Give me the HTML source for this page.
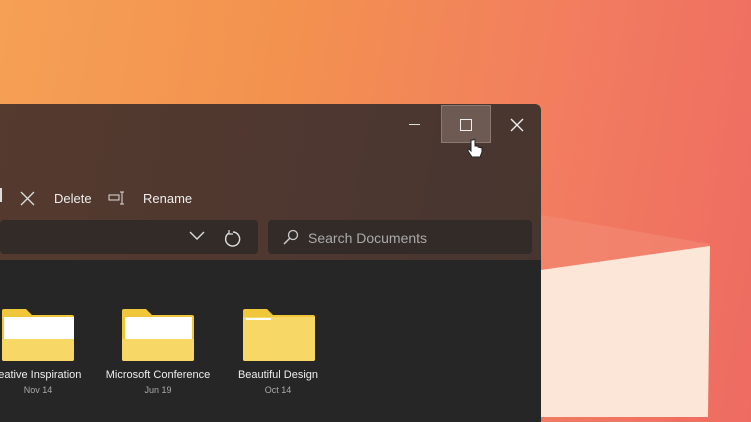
<!DOCTYPE html>
<html><head><meta charset="utf-8"><style>
*{margin:0;padding:0;box-sizing:border-box}
body{width:751px;height:422px;overflow:hidden;position:relative;font-family:"Liberation Sans",sans-serif;
background:linear-gradient(100deg,#f5a055 0%,#f3924f 35%,#f27d5f 70%,#ee6b62 100%);}
.win{position:absolute;left:0;top:104px;width:541px;height:318px;border-radius:0 6px 0 0;overflow:hidden;
background:linear-gradient(100deg,#553a2e,#4d3730 60%,#46352f);}
.content{position:absolute;left:0;top:156px;width:541px;height:162px;background:#262626;overflow:hidden}
.t{position:absolute;color:#eee;font-size:13px}
.box{position:absolute;background:#332b28;border-radius:4px;height:34px;top:116px}
.fold{position:absolute;top:49px;width:72px;height:52px}
.lbl{position:absolute;top:109px;color:#eee;font-size:11px;text-align:center;width:130px}
.dt{position:absolute;top:125px;color:#aaa;font-size:9px;text-align:center;width:130px}
</style></head><body>
<svg style="position:absolute;left:541px;top:200px" width="210" height="222">
<polygon points="0,15 169,44 169,50 0,70" fill="#f38a74" opacity=".6"/>
<polygon points="0,70 169,46 167,217 0,217" fill="#fbe6d8"/>
</svg>
<div class="win">
 <div style="position:absolute;left:441px;top:1px;width:50px;height:38px;background:#6d5a52;border:1px solid #8a7a72"></div>
 <div style="position:absolute;left:409px;top:20px;width:11px;height:1px;background:#ddd"></div>
 <div style="position:absolute;left:460px;top:15px;width:12px;height:12px;border:1.3px solid #eee"></div>
 <svg style="position:absolute;left:510px;top:14px" width="14" height="14"><path d="M1 1L13 13M13 1L1 13" stroke="#eee" stroke-width="1.4"/></svg>
 <svg style="position:absolute;left:466px;top:33px" width="18" height="24"><path d="M5 3v11l-2-2c-1 0-1 1-1 2l4 6h8l2-5v-4l-4-1V9h-3V3c0-1-2-1-2 0z" fill="#fff" stroke="#222" stroke-width="1"/></svg>
 <div style="position:absolute;left:0;top:84px;width:2px;height:14px;background:#ddd"></div>
 <svg style="position:absolute;left:20px;top:87px" width="15" height="15"><path d="M1 1L14 14M14 1L1 14" stroke="#ddd" stroke-width="1.3"/></svg>
 <div class="t" style="left:54px;top:87px">Delete</div>
 <svg style="position:absolute;left:108px;top:87px" width="18" height="14"><rect x="1" y="4" width="10" height="5" fill="none" stroke="#ddd"/><path d="M12 1h4M14 1v12M12 13h4" stroke="#ddd" fill="none"/></svg>
 <div class="t" style="left:143px;top:87px">Rename</div>
 <div class="box" style="left:0;width:258px"></div>
 <svg style="position:absolute;left:189px;top:127px" width="16" height="10"><path d="M1 1l7 7 7-7" stroke="#ddd" fill="none" stroke-width="1.4"/></svg>
 <svg style="position:absolute;left:224px;top:126px" width="18" height="18"><path d="M5 3A7 7 0 1 0 9 2" stroke="#ddd" fill="none" stroke-width="1.4"/><path d="M5 0v4h4" stroke="#ddd" fill="none" stroke-width="1.2"/></svg>
 <div class="box" style="left:268px;width:264px"></div>
 <svg style="position:absolute;left:283px;top:125px" width="16" height="16"><circle cx="10" cy="6" r="4.5" stroke="#ccc" fill="none" stroke-width="1.3"/><path d="M7 9L1 15" stroke="#ccc" stroke-width="1.5"/></svg>
 <div class="t" style="left:308px;top:126px;color:#aaa;font-size:14px">Search Documents</div>
 <div class="content">
  <svg class="fold" style="left:2px" viewBox="0 0 72 52"><path d="M0 2q0-2 2-2h22l6 6h40q2 0 2 2v42q0 2-2 2H2q-2 0-2-2z" fill="#f0c63a"/><rect x="2" y="8" width="70" height="22" fill="#fff"/><rect x="0" y="30" width="72" height="20" fill="#f7d766"/><path d="M0 50h72q0 2-2 2H2q-2 0-2-2z" fill="#f7d766"/></svg>
  <svg class="fold" style="left:122px" viewBox="0 0 72 52"><path d="M0 2q0-2 2-2h22l6 6h40q2 0 2 2v42q0 2-2 2H2q-2 0-2-2z" fill="#f0c63a"/><rect x="3" y="8" width="67" height="22" fill="#fff"/><rect x="0" y="30" width="72" height="20" fill="#f7d766"/><path d="M0 50h72q0 2-2 2H2q-2 0-2-2z" fill="#f7d766"/></svg>
  <svg class="fold" style="left:243px" viewBox="0 0 72 52"><path d="M0 2q0-2 2-2h22l6 6h40q2 0 2 2v42q0 2-2 2H2q-2 0-2-2z" fill="#f0c63a"/><path d="M0 8h72v42q0 2-2 2H2q-2 0-2-2z" fill="#f7d766"/><rect x="3" y="9" width="25" height="2" fill="#fff"/></svg>
  <div class="lbl" style="left:-27px">reative Inspiration</div><div class="dt" style="left:-27px">Nov 14</div>
  <div class="lbl" style="left:93px">Microsoft Conference</div><div class="dt" style="left:93px">Jun 19</div>
  <div class="lbl" style="left:213px">Beautiful Design</div><div class="dt" style="left:213px">Oct 14</div>
 </div>
</div>
</body></html>
